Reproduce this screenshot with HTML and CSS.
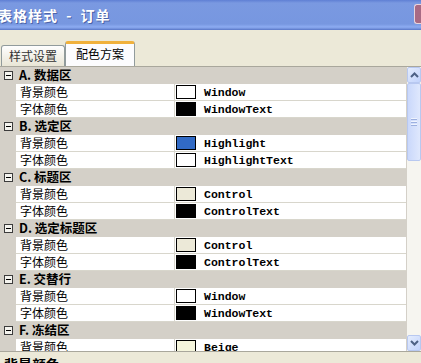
FILE: index.html
```html
<!DOCTYPE html>
<html lang="zh-CN">
<head>
    <meta charset="UTF-8">
    <title>表格样式 - 订单</title>
    <link rel="stylesheet" href="styles.css">
</head>
<body>
    <div class="window">
        <div class="titlebar">
            <span class="title">表格样式 - 订单</span>
            <span class="close"></span>
        </div>
        <div class="tabs">
            <div class="tab">样式设置</div>
            <div class="tab active">配色方案</div>
        </div>
        <div class="grid">
            <div class="rows">
                <div class="group"><span class="toggle"></span><span class="gname">A. 数据区</span></div>
                <div class="row"><span class="label">背景颜色</span><span class="value"><i class="swatch sw-white"></i>Window</span></div>
                <div class="row"><span class="label">字体颜色</span><span class="value"><i class="swatch sw-black"></i>WindowText</span></div>

                <div class="group"><span class="toggle"></span><span class="gname">B. 选定区</span></div>
                <div class="row"><span class="label">背景颜色</span><span class="value"><i class="swatch sw-blue"></i>Highlight</span></div>
                <div class="row"><span class="label">字体颜色</span><span class="value"><i class="swatch sw-white"></i>HighlightText</span></div>

                <div class="group"><span class="toggle"></span><span class="gname">C. 标题区</span></div>
                <div class="row"><span class="label">背景颜色</span><span class="value"><i class="swatch sw-control"></i>Control</span></div>
                <div class="row"><span class="label">字体颜色</span><span class="value"><i class="swatch sw-black"></i>ControlText</span></div>

                <div class="group"><span class="toggle"></span><span class="gname">D. 选定标题区</span></div>
                <div class="row"><span class="label">背景颜色</span><span class="value"><i class="swatch sw-control"></i>Control</span></div>
                <div class="row"><span class="label">字体颜色</span><span class="value"><i class="swatch sw-black"></i>ControlText</span></div>

                <div class="group"><span class="toggle"></span><span class="gname">E. 交替行</span></div>
                <div class="row"><span class="label">背景颜色</span><span class="value"><i class="swatch sw-white"></i>Window</span></div>
                <div class="row"><span class="label">字体颜色</span><span class="value"><i class="swatch sw-black"></i>WindowText</span></div>

                <div class="group"><span class="toggle"></span><span class="gname">F. 冻结区</span></div>
                <div class="row"><span class="label">背景颜色</span><span class="value"><i class="swatch sw-beige"></i>Beige</span></div>
            </div>
            <div class="scrollbar">
                <div class="sb-btn">
                    <svg width="9" height="6" viewBox="0 0 9 6"><path d="M1 5 L4.5 1.5 L8 5" fill="none" stroke="#4d6185" stroke-width="2"/></svg>
                </div>
                <div class="sb-thumb"><span></span><span></span><span></span></div>
                <div class="sb-track"></div>
                <div class="sb-btn">
                    <svg width="9" height="6" viewBox="0 0 9 6"><path d="M1 1 L4.5 4.5 L8 1" fill="none" stroke="#4d6185" stroke-width="2"/></svg>
                </div>
            </div>
        </div>
        <div class="desc">背景颜色</div>
    </div>
</body>
</html>
```

FILE: styles.css
```css
body {
    margin: 0;
    width: 421px;
    height: 363px;
    overflow: hidden;
    background-color: #ece9d8;
    font-family: "Noto Sans CJK SC", "Liberation Sans", sans-serif;
    font-size: 12px;
    color: #000;
}
.window {
    display: flex;
    flex-direction: column;
    height: 363px;
}
.window > div {
    flex-shrink: 0;
}
.titlebar {
    height: 30px;
    box-sizing: border-box;
    display: flex;
    align-items: center;
    justify-content: space-between;
    background: linear-gradient(#5f7fd4 0, #7a99e1 3px, #7797e0 24px, #8dacf2 27px, #6e8cd8 29px, #5573c4 30px);
    color: #fff;
}
.title {
    margin-left: -2px;
    font-size: 14px;
    font-weight: bold;
    letter-spacing: 1px;
    word-spacing: 4px;
    white-space: pre;
    text-shadow: 1px 1px 0 #4d64a8;
}
.close {
    width: 7px;
    height: 20px;
    margin-top: -3px;
    box-sizing: border-box;
    border: 1px solid #e8d4dc;
    border-right: none;
    border-radius: 3px 0 0 3px;
    background: #a86a84;
}
.tabs {
    height: 36px;
    display: flex;
    align-items: flex-end;
    padding-left: 1px;
    box-sizing: border-box;
}
.tab {
    height: 21px;
    width: 64px;
    box-sizing: border-box;
    border: 1px solid #919b9c;
    border-bottom: none;
    border-radius: 3px 3px 0 0;
    background: linear-gradient(#fefefe, #f1efe6 60%, #e9e6d6);
    text-align: center;
    line-height: 20px;
    font-size: 12px;
    color: #333;
}
.tab.active {
    height: 25px;
    width: 70px;
    border-top: 3px solid #f0b13c;
    background: #fcfcfe;
    color: #000;
    line-height: 20px;
}
.grid {
    height: 284px;
    display: flex;
    border-top: 1px solid #a9a79c;
    background: #d4d0c8;
}
.rows {
    flex: 1;
    overflow: hidden;
}
.group, .row {
    height: 17px;
    box-sizing: border-box;
    display: flex;
    align-items: center;
}
.group {
    background: #d4d0c8;
    border-bottom: 1px solid #d4d0c8;
}
.toggle {
    position: relative;
    width: 9px;
    height: 9px;
    box-sizing: border-box;
    margin: 0 6px 0 4px;
    border: 1px solid #3c3c3c;
    background: #f4f3ee;
}
.toggle::after {
    content: "";
    position: absolute;
    left: 1px;
    top: 3px;
    width: 5px;
    height: 1px;
    background: #000;
}
.gname {
    font-weight: bold;
    font-size: 12.5px;
    line-height: 16px;
}
.row {
    padding-left: 16px;
}
.label, .value {
    height: 16px;
    display: flex;
    align-items: center;
    background: #fff;
    border-bottom: 1px solid #d8d6cc;
}
.label {
    width: 154px;
    padding-left: 4px;
    border-right: 1px solid #d8d6cc;
    line-height: 16px;
}
.value {
    flex: 1;
    font-family: "Liberation Mono", monospace;
    font-weight: bold;
    font-size: 11.5px;
}
.swatch {
    width: 20px;
    height: 14px;
    box-sizing: border-box;
    margin: 0 8px 0 1px;
    border: 1px solid #000;
}
.sw-white { background: #fff; }
.sw-black { background: #000; }
.sw-blue { background: #316ac5; }
.sw-control { background: #ece9d8; }
.sw-beige { background: #f5f5dc; }
.scrollbar {
    width: 14px;
    margin-left: 1px;
    display: flex;
    flex-direction: column;
    background: #f6f5f0;
}
.sb-btn {
    height: 16px;
    box-sizing: border-box;
    display: flex;
    align-items: center;
    justify-content: center;
    border: 1px solid #b8c8f0;
    border-radius: 2px;
    background: linear-gradient(135deg, #e4ecfd, #c2d3fc);
}
.sb-thumb {
    height: 78px;
    box-sizing: border-box;
    display: flex;
    flex-direction: column;
    align-items: center;
    justify-content: center;
    gap: 1px;
    border: 1px solid #b8c8f0;
    border-radius: 2px;
    background: linear-gradient(90deg, #cad8fb, #dfe8fd);
}
.sb-thumb span {
    width: 6px;
    height: 1px;
    background: #eef3fe;
    border-bottom: 1px solid #9cb0e0;
}
.sb-track {
    flex: 1;
}
.desc {
    flex: 1;
    flex-shrink: 1;
    min-height: 0;
    overflow: hidden;
    border-top: 1px solid #a9a79c;
    padding: 3px 0 0 4px;
    font-size: 14px;
    font-weight: bold;
    line-height: 18px;
}
```
